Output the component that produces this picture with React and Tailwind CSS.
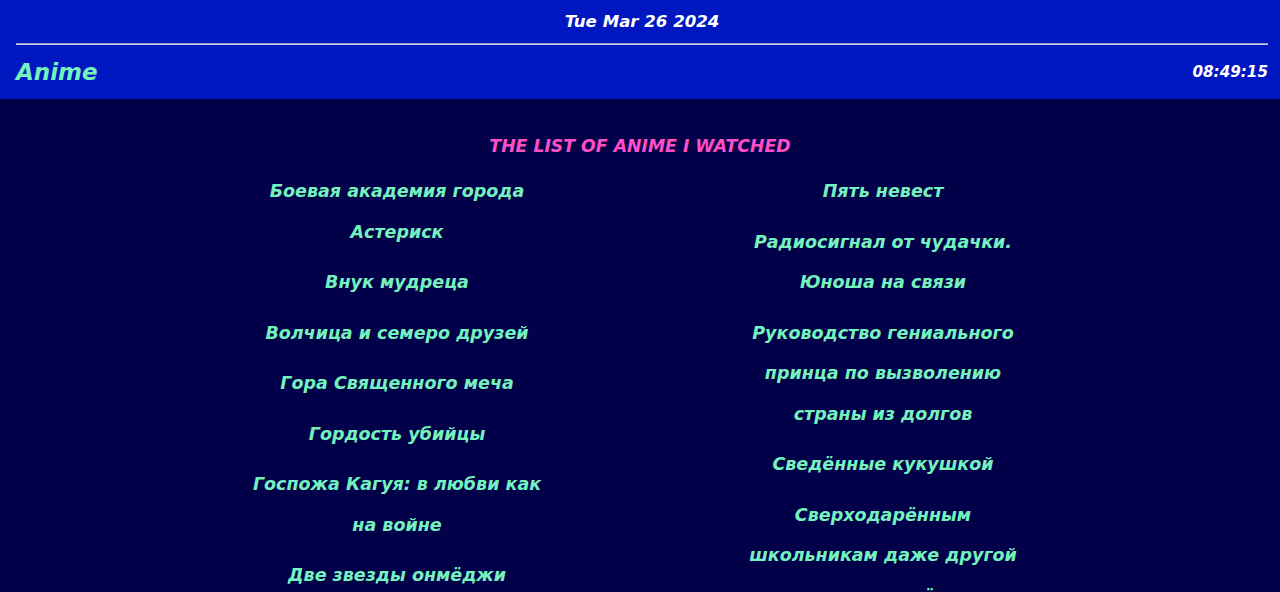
import React from "react";

const left = [
  ["Боевая академия города", "Астериск"],
  ["Внук мудреца"],
  ["Волчица и семеро друзей"],
  ["Гора Священного меча"],
  ["Гордость убийцы"],
  ["Госпожа Кагуя: в любви как", "на войне"],
  ["Две звезды онмёджи"],
];

const right = [
  ["Пять невест"],
  ["Радиосигнал от чудачки.", "Юноша на связи"],
  ["Руководство гениального", "принца по вызволению", "страны из долгов"],
  ["Сведённые кукушкой"],
  ["Сверходарённым", "школьникам даже другой", "мир нипочём"],
];

function Column({ items }) {
  return (
    <ul className="w-[300px] flex flex-col gap-[10px]">
      {items.map((lines, i) => (
        <li key={i} className="text-center leading-[40.5px]">
          {lines.map((l, j) => (
            <span key={j} className="block whitespace-nowrap">
              {l}
            </span>
          ))}
        </li>
      ))}
    </ul>
  );
}

export default function App() {
  return (
    <div
      className="h-[592px] overflow-hidden bg-[#03004a] italic font-bold flex flex-col"
      style={{ fontFamily: '"DejaVu Sans", "Noto Sans", sans-serif' }}
    >
      <header className="bg-[#0117c0] h-[99px] shrink-0 pl-[16px] pr-[12px] flex flex-col">
        <div className="h-[43px] flex items-center justify-center text-white text-[16.6px] pt-[1px]">
          Tue Mar 26 2024
        </div>
        <div className="h-[2px] bg-[#c9cde6] border-t border-[#8f95c8]" />
        <div className="flex-1 flex items-center justify-between">
          <span className="text-[#74f2bd] text-[23px]">Anime</span>
          <span className="text-white text-[15.2px]">08:49:15</span>
        </div>
      </header>
      <main className="flex-1 flex flex-col items-center pt-[35px] text-[#74f2bd] text-[17.5px]">
        <h2 className="text-[#ff4ec6] text-[17.3px] leading-[24px] mb-[13px]">
          THE LIST OF ANIME I WATCHED
        </h2>
        <div className="flex justify-center gap-[186px]">
          <Column items={left} />
          <Column items={right} />
        </div>
      </main>
      <div className="h-[2px] shrink-0 bg-[#4a4a55]" />
    </div>
  );
}
